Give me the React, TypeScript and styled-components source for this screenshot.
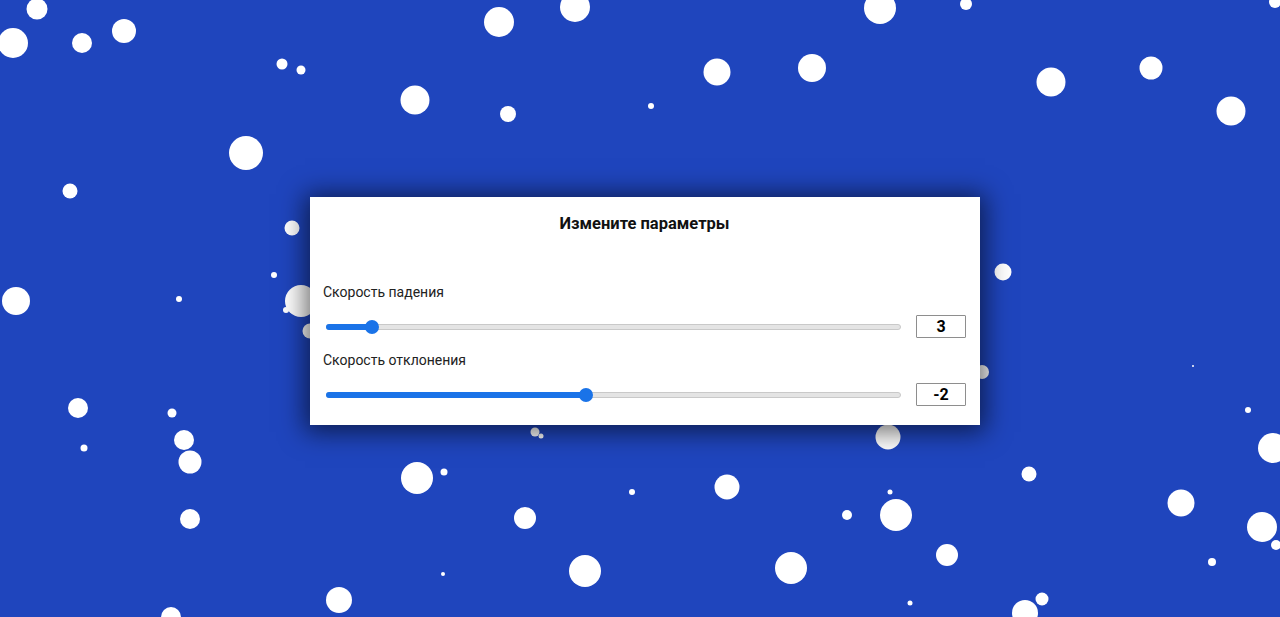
import React, { useState } from "react";
import styled, { createGlobalStyle } from "styled-components";

const GlobalStyle = createGlobalStyle`
  html, body { margin: 0; padding: 0; }
  body { font-family: Roboto, "Noto Sans", Arial, sans-serif; overflow: hidden; }
  * { box-sizing: border-box; }
`;

const Page = styled.div`
  position: relative;
  width: 100vw;
  height: 100vh;
  padding: 5px 0 0 10px;
  display: flex;
  align-items: center;
  justify-content: center;
  overflow: hidden;
  background: #1f45bd;
`;

const SnowLayer = styled.svg`
  position: absolute;
  inset: 0;
  width: 100%;
  height: 100%;
  z-index: 0;
`;

const Dialog = styled.div`
  position: relative;
  z-index: 1;
  width: 670px;
  background: #ffffff;
  padding: 17px 14px 19px 13px;
  box-shadow: 0 2px 24px 5px rgba(0, 0, 0, 0.58);
  display: flex;
  flex-direction: column;
`;

const Title = styled.h2`
  margin: 0 0 48px;
  font-size: 16.5px;
  line-height: 20px;
  font-weight: 700;
  color: #111;
  text-align: center;
`;

const Fields = styled.div`
  display: flex;
  flex-direction: column;
  gap: 12px;
`;

const Field = styled.div`
  display: flex;
  flex-direction: column;
  gap: 13px;
`;

const Label = styled.label`
  font-size: 14px;
  line-height: 20px;
  color: #222;
`;

const Row = styled.div`
  display: flex;
  align-items: center;
  gap: 15px;
  padding-left: 3px;
  height: 23px;
`;

const Track = styled.div`
  position: relative;
  flex: 1;
  height: 6px;
  border-radius: 3px;
  background: #e4e4e4;
  border: 1px solid #c9c9c9;
`;

const Fill = styled.div`
  position: absolute;
  left: -1px;
  top: -1px;
  bottom: -1px;
  border-radius: 3px;
  background: #1a73e8;
`;

const Thumb = styled.div`
  position: absolute;
  top: 50%;
  width: 14px;
  height: 14px;
  margin: -7px 0 0 -7px;
  border-radius: 50%;
  background: #1a73e8;
`;

const ValueBox = styled.input`
  width: 50px;
  height: 23px;
  border: 1px solid #8e8e8e;
  border-radius: 1px;
  padding: 0;
  font-family: Roboto, Arial, sans-serif;
  font-size: 16px;
  font-weight: 700;
  color: #000;
  text-align: center;
  outline: none;
  background: #fff;
`;

type SliderProps = { value: number; min: number; max: number };

const Slider: React.FC<SliderProps> = ({ value, min, max }) => {
  const frac = (value - min) / (max - min);
  const pos = `calc(7px + ${frac} * (100% - 14px))`;
  return (
    <Track>
      <Fill style={{ width: pos }} />
      <Thumb style={{ left: pos }} />
    </Track>
  );
};

const flakes: [number, number, number][] = [
  [37, 9, 21], [13, 43, 30], [82, 43, 20], [124, 31, 24], [282, 64, 11],
  [301, 70, 9], [246, 153, 34], [70, 191, 15], [499, 22, 30], [575, 7, 30],
  [415, 100, 29], [508, 114, 16], [651, 106, 6], [717, 72, 27], [812, 68, 28],
  [880, 8, 32], [966, 4, 12], [1051, 82, 29], [1151, 68, 23], [1231, 111, 29],
  [1275, 2, 12],
  [292, 228, 15], [274, 275, 6], [16, 301, 28], [179, 299, 6], [301, 301, 32],
  [286, 310, 6], [310, 331, 15], [78, 408, 20], [172, 413, 9], [84, 448, 7],
  [184, 440, 20], [190, 462, 23], [190, 519, 20], [171, 617, 20],
  [1003, 272, 17], [982, 372, 14], [1193, 366, 2], [1248, 410, 6], [1273, 448, 30],
  [1029, 474, 15], [1181, 503, 27], [1262, 527, 30], [1276, 545, 10], [1212, 562, 8],
  [1042, 599, 13], [1025, 613, 26],
  [417, 478, 32], [444, 472, 7], [525, 518, 22], [632, 492, 6], [727, 487, 25],
  [847, 515, 10], [896, 515, 32], [890, 492, 5], [888, 437, 25], [947, 555, 22],
  [585, 571, 32], [791, 568, 32], [443, 574, 4], [339, 600, 26], [910, 603, 5],
  [535, 432, 9], [541, 436, 5],
];

const Snow: React.FC = () => (
  <SnowLayer viewBox="0 0 1280 617" preserveAspectRatio="xMinYMin slice">
    {flakes.map(([x, y, d], i) => (
      <circle key={i} cx={x} cy={y} r={d / 2} fill="#ffffff" />
    ))}
  </SnowLayer>
);

export default function App() {
  const [fall, setFall] = useState("3");
  const [drift, setDrift] = useState("-2");
  const fallN = Number(fall) || 0;
  const driftN = Number(drift) || 0;
  return (
    <>
      <GlobalStyle />
      <Page>
        <Snow />
        <Dialog>
          <Title>Измените параметры</Title>
          <Fields>
            <Field>
              <Label>Скорость падения</Label>
              <Row>
                <Slider value={fallN} min={0} max={44} />
                <ValueBox value={fall} onChange={(e) => setFall(e.target.value)} />
              </Row>
            </Field>
            <Field>
              <Label>Скорость отклонения</Label>
              <Row>
                <Slider value={driftN} min={-11} max={9} />
                <ValueBox value={drift} onChange={(e) => setDrift(e.target.value)} />
              </Row>
            </Field>
          </Fields>
        </Dialog>
      </Page>
    </>
  );
}
